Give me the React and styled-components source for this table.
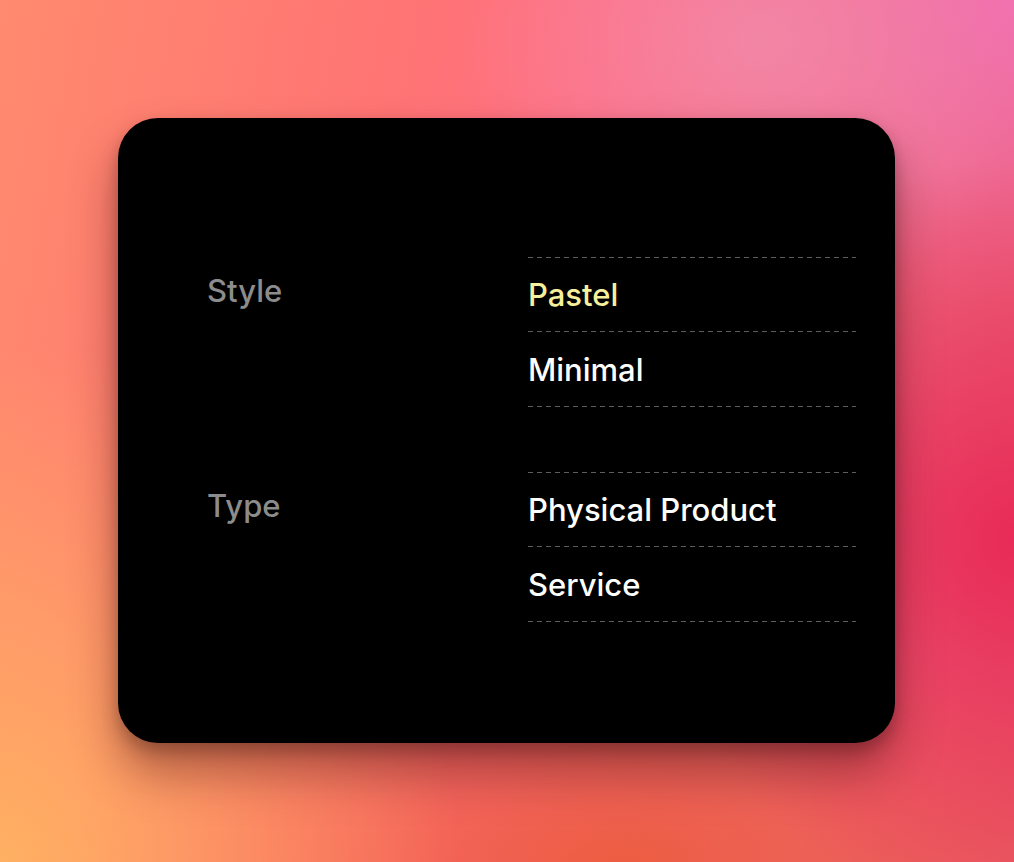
import React from "react";
import styled, { createGlobalStyle } from "styled-components";

const GlobalStyle = createGlobalStyle`
  html, body {
    margin: 0;
    padding: 0;
  }
  body {
    font-family: Inter, "Noto Sans", sans-serif;
  }
`;

const groups = [
  { label: "Style", items: [{ name: "Pastel", active: true }, { name: "Minimal" }] },
  { label: "Type", items: [{ name: "Physical Product" }, { name: "Service" }] },
];

const App = () => {
  return (
    <>
      <GlobalStyle />
      <Backdrop>
        <Card>
          {groups.map((group) => (
            <Group key={group.label}>
              <Label>{group.label}</Label>
              <Options>
                {group.items.map((item) => (
                  <Option key={item.name} $active={item.active}>
                    {item.name}
                  </Option>
                ))}
              </Options>
            </Group>
          ))}
        </Card>
      </Backdrop>
    </>
  );
};

// dashed divider, drawn as a gradient so the dash length is under control
const dash = `repeating-linear-gradient(to right, #5c5c5c 0 5px, transparent 5px 9px)`;

const Backdrop = styled.div`
  width: 1014px;
  height: 862px;
  box-sizing: border-box;
  padding: 118px 0 0 118px;
  overflow: hidden;
  background:
    radial-gradient(ellipse 360px 380px at 1014px 540px, rgba(232, 40, 86, 0.95), rgba(232, 40, 86, 0) 100%),
    radial-gradient(ellipse 300px 260px at 760px 40px, rgba(242, 140, 170, 0.8), rgba(242, 140, 170, 0) 100%),
    radial-gradient(ellipse 360px 320px at 1014px 0px, rgba(242, 110, 180, 0.95), rgba(242, 110, 180, 0) 100%),
    radial-gradient(ellipse 460px 520px at 0px 862px, rgba(255, 176, 98, 1), rgba(255, 176, 98, 0) 100%),
    radial-gradient(ellipse 560px 260px at 620px 862px, rgba(236, 92, 62, 0.95), rgba(236, 92, 62, 0) 100%),
    linear-gradient(100deg, #ff8a6e 0%, #ff7474 35%, #ff6e86 55%, #ee6a80 80%, #e85a6e 100%);
`;

const Card = styled.div`
  width: 777px;
  height: 625px;
  box-sizing: border-box;
  padding: 139px 39px 0 89px;
  background: #000;
  border-radius: 40px;
  box-shadow: 0 30px 48px rgba(70, 15, 15, 0.42), 0 8px 16px rgba(0, 0, 0, 0.25);
  display: flex;
  flex-direction: column;
  gap: 65px;
`;

const Group = styled.div`
  display: grid;
  grid-template-columns: 321px 1fr;
`;

const Label = styled.div`
  color: #8c8c8c;
  font-size: 31px;
  font-weight: 500;
  line-height: 74px;
  margin-top: -3px;
`;

const Options = styled.div`
  background-image: ${dash};
  background-size: 100% 1px;
  background-repeat: no-repeat;
  background-position: 0 0;
`;

const Option = styled.div`
  height: 75px;
  display: flex;
  align-items: center;
  padding-bottom: 1px;
  box-sizing: border-box;
  font-size: 31px;
  font-weight: 500;
  color: ${(p) => (p.$active ? "#f6ef9c" : "#fff")};
  background-image: ${dash};
  background-size: 100% 1px;
  background-repeat: no-repeat;
  background-position: 0 100%;
`;

export default App;
